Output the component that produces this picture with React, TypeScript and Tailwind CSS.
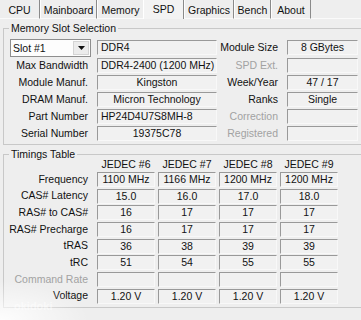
import type { ReactNode } from "react";

const tabs = [
  { name: "CPU", w: "w-[40px]" },
  { name: "Mainboard", w: "w-[57px]" },
  { name: "Memory", w: "w-[46px]" },
  { name: "SPD", w: "w-[41px]", active: true },
  { name: "Graphics", w: "w-[50px]" },
  { name: "Bench", w: "w-[37px]" },
  { name: "About", w: "w-[40px]" },
];

const slotRows = [
  { label: "Max Bandwidth", value: "DDR4-2400 (1200 MHz)", align: "left", right: "SPD Ext.", rightValue: "", dim: true },
  { label: "Module Manuf.", value: "Kingston", right: "Week/Year", rightValue: "47 / 17" },
  { label: "DRAM Manuf.", value: "Micron Technology", right: "Ranks", rightValue: "Single" },
  { label: "Part Number", value: "HP24D4U7S8MH-8", align: "left", right: "Correction", rightValue: "", dim: true },
  { label: "Serial Number", value: "19375C78", right: "Registered", rightValue: "", dim: true },
];

const timings = [
  { label: "Frequency", values: ["1100 MHz", "1166 MHz", "1200 MHz", "1200 MHz"] },
  { label: "CAS# Latency", values: ["15.0", "16.0", "17.0", "18.0"] },
  { label: "RAS# to CAS#", values: ["16", "17", "17", "17"] },
  { label: "RAS# Precharge", values: ["16", "17", "17", "17"] },
  { label: "tRAS", values: ["36", "38", "39", "39"] },
  { label: "tRC", values: ["51", "54", "55", "55"] },
  { label: "Command Rate", values: ["", "", "", ""], dim: true },
  { label: "Voltage", values: ["1.20 V", "1.20 V", "1.20 V", "1.20 V"] },
];

function Field({ children, className = "" }: { children?: ReactNode; className?: string }) {
  return (
    <div
      className={`h-[15px] leading-[13px] border border-t-[#999999] border-l-[#999999] border-b-[#f8f8f8] border-r-[#f8f8f8] bg-[#f1f1f1] whitespace-nowrap overflow-hidden ${className}`}
    >
      {children}
    </div>
  );
}

export default function App() {
  return (
    <div className="relative w-[361px] h-[320px] overflow-hidden bg-[#eeeeee] font-['Liberation_Sans',Arial,sans-serif] text-[10.5px] text-[#111111]">
      {/* tab strip */}
      <div className="flex h-[19px]">
        {tabs.map((t, i) => (
          <div
            key={t.name}
            className={
              t.active
                ? `${t.w} h-[19px] flex justify-center pt-[2px] border-l border-l-white border-r border-r-[#8a8a8a] bg-[#f3f3f3]`
                : `${t.w} h-[19px] flex justify-center pt-[3px] border-b border-b-[#fafafa] ${
                    i === 2 ? "" : "border-r border-r-[#8a8a8a]"
                  } ${i === 0 ? "" : "border-l border-l-[#fdfdfd]"}`
            }
          >
            {t.name}
          </div>
        ))}
        <div className="flex-1 border-b border-b-[#fafafa]" />
      </div>

      {/* Memory Slot Selection */}
      <fieldset className="ml-[3px] mt-[3px] w-[380px] border border-[#c8c8c8] pt-[5px] pb-[3px]">
        <legend className="ml-[5px] px-[2px] leading-[12px]">Memory Slot Selection</legend>
        <div className="flex items-center h-[17px]">
          <div className="ml-[6px] w-[81px] h-[18px] flex border border-[#8e8e8e] bg-[#fdfdfd]">
            <span className="flex-1 pl-[2px] leading-[16px]">Slot #1</span>
            <div className="w-[16px] my-[1px] mr-[1px] flex items-center justify-center bg-[#ececec] border border-[#d4d4d4]">
              <svg width="7" height="4" viewBox="0 0 7 4">
                <path d="M0 0h7L3.5 4z" fill="#111" />
              </svg>
            </div>
          </div>
          <Field className="ml-[6px] w-[120px] pl-[3px]">DDR4</Field>
          <span className="w-[61px] text-right">Module Size</span>
          <Field className="ml-[9px] w-[71px] text-center">8 GBytes</Field>
        </div>
        <div className="flex flex-col gap-[2px] mt-[2px]">
          {slotRows.map((r) => (
            <div key={r.label} className="flex items-center h-[15px]">
              <span className="w-[84px] text-right">{r.label}</span>
              <Field className={`ml-[9px] w-[120px] ${r.align === "left" ? "pl-[3px]" : "text-center"}`}>
                {r.value}
              </Field>
              <span className={`w-[61px] text-right ${r.dim ? "text-[#a2a2a2]" : ""}`}>{r.right}</span>
              <Field className="ml-[9px] w-[71px] text-center">{r.rightValue}</Field>
            </div>
          ))}
        </div>
      </fieldset>

      {/* Timings Table */}
      <fieldset className="ml-[3px] mt-[3px] w-[380px] border border-[#c8c8c8] pb-[3px]">
        <legend className="ml-[5px] px-[2px] leading-[12px]">Timings Table</legend>
        <div className="flex h-[11px] leading-[9px]">
          <span className="w-[93px]" />
          {["JEDEC #6", "JEDEC #7", "JEDEC #8", "JEDEC #9"].map((h) => (
            <span key={h} className="w-[58px] mr-[3px] text-center">
              {h}
            </span>
          ))}
        </div>
        <div className="flex flex-col gap-[1.7px] mt-[1px]">
          {timings.map((r) => (
            <div key={r.label} className="flex items-center h-[15px]">
              <span className={`w-[84px] text-right ${r.dim ? "text-[#a2a2a2]" : ""}`}>{r.label}</span>
              <div className="ml-[9px] flex gap-[3px]">
                {r.values.map((v, i) => (
                  <Field key={i} className="w-[58px] text-center">
                    {v}
                  </Field>
                ))}
              </div>
            </div>
          ))}
        </div>
      </fieldset>

      {/* photo glare + watermark */}
      <div className="pointer-events-none absolute left-0 bottom-0 w-[90px] h-[40px] bg-[radial-gradient(ellipse_at_bottom_left,rgba(255,255,255,0.9),rgba(255,255,255,0)_70%)]" />
      <span className="pointer-events-none absolute left-[14px] top-[298px] text-[11px] text-white/50 font-bold">okidoki</span>
    </div>
  );
}
